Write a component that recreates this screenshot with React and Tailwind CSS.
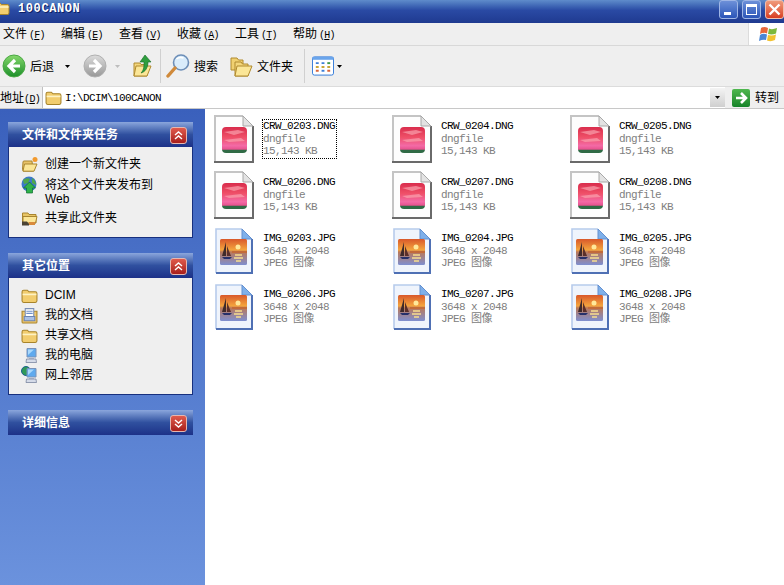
import React from "react";

const cjk = { fontFamily: '"Liberation Sans","Noto Sans CJK SC",sans-serif' };

function Folder({ size = 17 }) {
  return (
    <svg width={size} height={size} viewBox="0 0 16 16">
      <path d="M1 4.5 Q1 3 2.5 3 H6 L7.5 4.5 H13.5 Q15 4.5 15 6 V13 Q15 14.5 13.5 14.5 H2.5 Q1 14.5 1 13 Z" fill="#f2cd6e" stroke="#a8842a" />
      <path d="M1.5 7 H14.5" stroke="#fdf2c4" strokeWidth="1.5" />
    </svg>
  );
}

function DocsIcon() {
  return (
    <svg width="17" height="17" viewBox="0 0 16 16">
      <path d="M1 4 H15 V14 Q15 15 14 15 H2 Q1 15 1 14 Z" fill="#eec66a" stroke="#a9852f" />
      <path d="M4 1.5 H12 V9 H4 Z" fill="#fff" stroke="#7a8fb5" />
      <path d="M5 4 H11 M5 6 H11" stroke="#6f8fc9" />
      <path d="M3 9 H13 V13 H3 Z" fill="#a9c0e6" stroke="#6b84b4" />
    </svg>
  );
}

function ComputerIcon({ globe }) {
  return (
    <svg width="18" height="18" viewBox="0 0 18 18">
      {globe && <circle cx="5" cy="5" r="4.5" fill="#2f9a58" stroke="#1d5f8f" />}
      <path d="M6 2.5 H15 V11 H6 Z" fill="#5ea9ee" stroke="#7a92b8" />
      <path d="M7 3.5 L13 3.5 L7 9 Z" fill="#a9d8fb" />
      <path d="M8 11 H13 V13 H8 Z" fill="#b9c3d6" />
      <path d="M5.5 13 H15 L15.5 16.5 H5 Z" fill="#d5dbe8" stroke="#6d7a96" strokeWidth="0.7" />
    </svg>
  );
}

function NewFolderIcon() {
  return (
    <svg width="18" height="17" viewBox="0 0 18 17">
      <path d="M2 6 Q2 5 3 5 H11 L12 15 H3 Q1.5 15 1.5 13.5 Z" fill="#e9c46a" stroke="#a9852f" />
      <path d="M3.5 8 H16 L13 15.2 H2 Z" fill="#fbe697" stroke="#a9852f" />
      <circle cx="14" cy="3.5" r="2.5" fill="#f29a2e" />
    </svg>
  );
}

function PublishIcon() {
  return (
    <svg width="17" height="18" viewBox="0 0 17 18">
      <circle cx="8" cy="8" r="7.5" fill="#3b78c9" />
      <path d="M2 4 Q6 1 9 3 L7 7 L3 8 Z M11 2 Q15 5 15 9 L11 7 Z" fill="#4ea74a" />
      <path d="M8.5 6 L14.5 12 H11.5 V17 H5.5 V12 H2.5 Z" fill="#2fb24a" stroke="#0d6f2f" strokeWidth="0.7" />
    </svg>
  );
}

function ShareIcon() {
  return (
    <svg width="17" height="17" viewBox="0 0 17 17">
      <path d="M1.5 3 H7 L8 4.5 H15 V13 H1.5 Z" fill="#e8c566" stroke="#a9852f" />
      <path d="M2 6.5 H16 L14.5 13 H2 Z" fill="#fbe697" stroke="#a9852f" />
      <path d="M1 11.5 H6 L8 14 V15.5 H1 Z" fill="#4b4334" />
      <path d="M8 12 H14 V15 H8 Z" fill="#d98a3c" />
    </svg>
  );
}

function Chevron({ down }) {
  return (
    <span className="flex h-[17px] w-[17px] items-center justify-center rounded-[3px] border border-[#e5b7b0] bg-gradient-to-b from-[#e05a4c] to-[#a81d1b]">
      <svg width="9" height="9" viewBox="0 0 9 9" fill="none" stroke="#fff" strokeWidth="1.4" className={down ? "rotate-180" : ""}>
        <path d="M1 4 L4.5 1 L8 4 M1 8 L4.5 5 L8 8" />
      </svg>
    </span>
  );
}

function Panel({ title, down, children, h }) {
  return (
    <div className="w-[185px]">
      <div className="flex h-[25px] items-center justify-between bg-gradient-to-b from-[#8ba6dc] via-[#30509f] via-50% to-[#1d3188] pl-[14px] pr-[6px] pt-[1px]">
        <span className="text-[12px] font-bold text-white" style={cjk}>{title}</span>
        <Chevron down={down} />
      </div>
      {children && (
        <div className={`border border-t-0 border-[#17307e] bg-[#efefef] pl-[11px] pr-2 text-[12px] text-black ${h}`} style={cjk}>
          {children}
        </div>
      )}
    </div>
  );
}

function TaskRow({ icon, children, cls = "" }) {
  return (
    <div className={`flex items-start gap-[6px] ${cls}`}>
      <span className="flex h-[18px] w-[19px] shrink-0 items-center justify-center">{icon}</span>
      <span className="pt-[2px] leading-[14px]">{children}</span>
    </div>
  );
}

function CrwIcon() {
  return (
    <svg width="40" height="48" viewBox="0 0 40 48" className="shrink-0">
      <defs>
        <linearGradient id="crw" x1="0" y1="0" x2="0" y2="1">
          <stop offset="0" stopColor="#d92c4c" />
          <stop offset="0.4" stopColor="#ef5068" />
          <stop offset="0.72" stopColor="#f36aa6" />
          <stop offset="0.86" stopColor="#e6528e" />
          <stop offset="0.88" stopColor="#2f6a45" />
          <stop offset="1" stopColor="#2f6a45" />
        </linearGradient>
      </defs>
      <path d="M1 1 H29 L39 11 V47 H1 Z" fill="#fdfdfd" />
      <path d="M1 47 V1 H29" fill="none" stroke="#c4c4c4" strokeWidth="2" />
      <path d="M0 47 H39 V11" fill="none" stroke="#6a6a6a" strokeWidth="2" />
      <path d="M29 1 V11 H39 Z" fill="#e3e3e3" stroke="#a8a8a8" />
      <rect x="8" y="12" width="25" height="26" rx="4" fill="url(#crw)" />
      <path d="M10 17 L24 15 L31 17 L20 20 Z M10 25 L27 23 L31 26 L15 27 Z" fill="#f9a3ae" opacity="0.7" />
    </svg>
  );
}

function JpgIcon() {
  return (
    <svg width="38" height="46" viewBox="0 0 38 46" className="shrink-0">
      <defs>
        <linearGradient id="jpg" x1="0" y1="0" x2="0" y2="1">
          <stop offset="0" stopColor="#d9582a" />
          <stop offset="0.42" stopColor="#f4a53e" />
          <stop offset="0.5" stopColor="#b9785a" />
          <stop offset="1" stopColor="#7e8fd0" />
        </linearGradient>
      </defs>
      <path d="M1 1 H27 L37 11 V45 H1 Z" fill="#eff4fc" />
      <path d="M1 45 V1 H27" fill="none" stroke="#b7cbec" strokeWidth="1.6" />
      <path d="M1 45 H37 V11" fill="none" stroke="#4f70b4" strokeWidth="2" />
      <path d="M27 1 V11 H37 Z" fill="#7fb0ea" stroke="#6490d0" />
      <rect x="5" y="11" width="27" height="26" rx="1.5" fill="url(#jpg)" />
      <path d="M11 14 L11 28 L7 28 Z" fill="#3f2a2a" />
      <path d="M12 18 L16 28 L12 28 Z" fill="#5a2f2a" />
      <path d="M7 29 H17 L15 31 H9 Z" fill="#26306a" />
      <path d="M17 23 H32 V25 H17 Z" fill="#c26a3a" />
      <circle cx="23" cy="19" r="2.5" fill="#ffe89a" />
      <path d="M20 27 H27 M19 30 H28 M21 33 H26" stroke="#f8de8e" strokeWidth="1.4" />
    </svg>
  );
}

function FileItem({ kind, name, l2, l3, focus }) {
  const mono = { fontFamily: '"Liberation Mono","Noto Sans CJK SC",monospace', letterSpacing: "-0.6px" };
  return (
    <div className="flex h-[56px] items-start">
      <span className={`flex w-[50px] ${kind === "crw" ? "pl-[1px]" : "pl-[2px] pt-[1px]"}`}>{kind === "crw" ? <CrwIcon /> : <JpgIcon />}</span>
      <div
        className={`mt-[5px] w-[73px] whitespace-nowrap pb-[1px] text-[11px] leading-[12px] ${focus ? "outline-dotted outline-1 outline-black" : ""}`}
        style={mono}
      >
        <div className="text-black">{name}</div>
        <div className="mt-[1px] text-[#808080]">{l2}</div>
        <div className="text-[#808080]">{l3}</div>
      </div>
    </div>
  );
}

const files = [
  ["crw", "CRW_0203.DNG", "dngfile", "15,143 KB", true],
  ["crw", "CRW_0204.DNG", "dngfile", "15,143 KB"],
  ["crw", "CRW_0205.DNG", "dngfile", "15,143 KB"],
  ["crw", "CRW_0206.DNG", "dngfile", "15,143 KB"],
  ["crw", "CRW_0207.DNG", "dngfile", "15,143 KB"],
  ["crw", "CRW_0208.DNG", "dngfile", "15,143 KB"],
  ["jpg", "IMG_0203.JPG", "3648 x 2048", "JPEG 图像"],
  ["jpg", "IMG_0204.JPG", "3648 x 2048", "JPEG 图像"],
  ["jpg", "IMG_0205.JPG", "3648 x 2048", "JPEG 图像"],
  ["jpg", "IMG_0206.JPG", "3648 x 2048", "JPEG 图像"],
  ["jpg", "IMG_0207.JPG", "3648 x 2048", "JPEG 图像"],
  ["jpg", "IMG_0208.JPG", "3648 x 2048", "JPEG 图像"],
];

function RoundArrow({ disabled, right }) {
  const id = disabled ? "gr" : "gn";
  return (
    <svg width="24" height="24" viewBox="0 0 24 24">
      <defs>
        <linearGradient id={id} x1="0" y1="0" x2="0" y2="1">
          <stop offset="0" stopColor={disabled ? "#dcdcdc" : "#86d86c"} />
          <stop offset="1" stopColor={disabled ? "#989898" : "#1c8f2a"} />
        </linearGradient>
      </defs>
      <circle cx="12" cy="12" r="11" fill={`url(#${id})`} stroke={disabled ? "#b0b0b0" : "#4aa844"} />
      <path d="M13 6 L7 12 L13 18 M7 12 H18" fill="none" stroke="#fff" strokeWidth="3.2" transform={right ? "rotate(180 12 12)" : ""} />
    </svg>
  );
}

function Caret({ color = "#000" }) {
  return (
    <svg width="5" height="3" viewBox="0 0 5 3"><path d="M0 0 H5 L2.5 3 Z" fill={color} /></svg>
  );
}

function Menu({ label, k }) {
  return (
    <span className="w-[58px] whitespace-nowrap text-[12px] text-black" style={cjk}>
      {label}
      <span className="ml-[2px] text-[10px]" style={{ fontFamily: '"Liberation Mono",monospace', letterSpacing: "-0.8px" }}>
        (<span className="underline">{k}</span>)
      </span>
    </span>
  );
}

export default function App() {
  return (
    <div className="flex h-[585px] w-[784px] flex-col overflow-hidden bg-white">
      {/* Title bar */}
      <div className="relative flex h-[23px] shrink-0 items-start bg-gradient-to-b from-[#5f8ccb] via-[#2a4aa4] via-45% to-[#1f3a90]">
        <span className="-ml-[6px] flex"><Folder size={16} /></span>
        <span className="ml-[8px] text-[12px] font-bold leading-[18px] text-white" style={{ fontFamily: '"Liberation Mono",monospace', letterSpacing: "0.6px", textShadow: "1px 1px 0 #0b1f66" }}>100CANON</span>
        <div className="absolute right-0 top-0 flex gap-[4px]">
          <span className="flex h-[19px] w-[19px] items-end rounded-[3px] border border-[#9fb6e6] bg-gradient-to-b from-[#6d90d8] to-[#2c55b8] pb-[3px] pl-[4px]">
            <span className="h-[3px] w-[7px] bg-white" />
          </span>
          <span className="flex h-[19px] w-[19px] items-center justify-center rounded-[3px] border border-[#9fb6e6] bg-gradient-to-b from-[#6d90d8] to-[#2c55b8]">
            <span className="h-[11px] w-[11px] border border-t-[3px] border-white" />
          </span>
          <span className="flex h-[19px] w-[19px] items-center justify-center rounded-[3px] border border-[#f0c0b0] bg-gradient-to-b from-[#ef9a7a] to-[#d83c20]">
            <svg width="13" height="13" viewBox="0 0 13 13"><path d="M1.5 1.5 L11.5 11.5 M11.5 1.5 L1.5 11.5" stroke="#fff" strokeWidth="2.4" /></svg>
          </span>
        </div>
      </div>

      {/* Menu */}
      <div className="flex h-[23px] shrink-0 items-center justify-between border-b border-[#d8d8d8] bg-[#efefef]">
        <div className="flex pl-[3px]">
          <Menu label="文件" k="F" />
          <Menu label="编辑" k="E" />
          <Menu label="查看" k="V" />
          <Menu label="收藏" k="A" />
          <Menu label="工具" k="T" />
          <Menu label="帮助" k="H" />
        </div>
        <div className="flex h-[22px] w-[36px] items-center justify-center border-l border-[#dcdcdc] bg-white pl-[4px]">
          <svg width="20" height="18" viewBox="0 0 20 18">
            <path d="M2 3 Q5 1 9 3 L8 8.5 Q5 7 1 9 Z" fill="#e8673a" />
            <path d="M10 3.5 Q13 5 18 3 L17 8.5 Q13 10 9 9 Z" fill="#7cb83c" />
            <path d="M1 10 Q4 8 8 9.5 L7 15 Q4 14 0 16 Z" fill="#4a86d6" />
            <path d="M9 10 Q13 11 17 9.5 L16 15 Q12 17 8 15.5 Z" fill="#f2c230" />
          </svg>
        </div>
      </div>

      {/* Toolbar */}
      <div className="flex h-[41px] shrink-0 items-center border-b border-[#dcdcdc] bg-[#efefef] text-[12px] text-black" style={cjk}>
        <span className="ml-[2px] flex"><RoundArrow /></span>
        <span className="ml-[4px] w-[35px] pt-[1px]">后退</span>
        <Caret />
        <span className="ml-[13px] flex"><RoundArrow disabled right /></span>
        <span className="ml-[8px] flex"><Caret color="#bdbdbd" /></span>
        <span className="ml-[13px] flex">
          <svg width="20" height="24" viewBox="0 0 20 24">
            <path d="M1 9 H7 L8 10.5 H14 V22 H1 Z" fill="#f3d67c" stroke="#b08a2e" />
            <path d="M3 12 H18 L14 22 H1 Z" fill="#fbe697" stroke="#b08a2e" />
            <path d="M12 1 L18 8 H15 C15 14 12 18 8 19 C11 16 11 12 11 8 H7 Z" fill="#2f9e3e" stroke="#166b25" strokeWidth="0.6" />
          </svg>
        </span>
        <span className="ml-[7px] h-[34px] w-px bg-[#d0d0d0]" />
        <span className="ml-[5px] flex">
          <svg width="24" height="26" viewBox="0 0 24 26">
            <circle cx="15" cy="9.5" r="7.5" fill="#d9ecfb" stroke="#6d8fb8" strokeWidth="1.6" />
            <path d="M10.5 6 Q13.5 3.5 17.5 5" stroke="#fff" strokeWidth="1.6" fill="none" />
            <path d="M9 15 L2 23" stroke="#d08a3a" strokeWidth="3.4" strokeLinecap="round" />
          </svg>
        </span>
        <span className="ml-[4px] w-[36px] pt-[1px]">搜索</span>
        <span className="flex">
          <svg width="23" height="21" viewBox="0 0 23 21">
            <path d="M1 2 H7 L8.5 4 H13 V14 H1 Z" fill="#f0d070" stroke="#b08a2e" />
            <path d="M5 6 H11 L12.5 8 H18 V20 H5 Z" fill="#f3d67c" stroke="#b08a2e" />
            <path d="M7 10 H22 L18 20 H5 Z" fill="#fbe697" stroke="#b08a2e" />
          </svg>
        </span>
        <span className="ml-[4px] w-[47px] pt-[1px]">文件夹</span>
        <span className="h-[34px] w-px bg-[#d0d0d0]" />
        <span className="ml-[7px] flex">
          <svg width="22" height="20" viewBox="0 0 23 20">
            <rect x="0.5" y="0.5" width="22" height="19" rx="2" fill="#fff" stroke="#2f78d8" />
            <rect x="0.5" y="0.5" width="22" height="3" fill="#6aa5ec" />
            <path d="M4 6 H7 V8 H4 Z M10 6 H13 V8 H10 Z" fill="#3d7fd8" />
            <path d="M16 6 H19 V8 H16 Z" fill="#3c9a4a" />
            <path d="M4 10 H7 V12 H4 Z M10 10 H13 V12 H10 Z M16 10 H19 V12 H16 Z" fill="#c9a63a" />
            <path d="M4 14 H7 V16 H4 Z M16 14 H19 V16 H16 Z" fill="#d8643a" />
            <path d="M10 14 H13 V16 H10 Z" fill="#3d7fd8" />
          </svg>
        </span>
        <span className="ml-[3px] flex"><Caret /></span>
      </div>

      {/* Address bar */}
      <div className="flex h-[22px] shrink-0 items-center border-b border-[#c8c8c8] bg-[#efefef] text-[12px] text-black" style={cjk}>
        <span className="w-[42px] whitespace-nowrap pt-[1px]">地址<span className="text-[10px]" style={{ fontFamily: '"Liberation Mono",monospace', letterSpacing: "-0.6px" }}>(<span className="underline">D</span>)</span></span>
        <div className="flex h-[21px] w-[683px] items-center border-l border-[#c0c0c0] bg-white pl-[2px]">
          <Folder />
          <span className="ml-[3px] flex-1 pt-[1px] text-[11px]" style={{ fontFamily: '"Liberation Mono",monospace', letterSpacing: "-0.6px" }}>I:\DCIM\100CANON</span>
          <span className="flex h-[19px] w-[15px] items-center justify-center bg-gradient-to-b from-[#f4f4f4] to-[#cfcfcf]"><Caret /></span>
        </div>
        <span className="ml-[7px] flex h-[18px] w-[18px] items-center justify-center rounded-[2px] bg-gradient-to-b from-[#4fb84f] to-[#14842a]">
          <svg width="14" height="14" viewBox="0 0 14 14"><path d="M7 2 L12 7 L7 12 M12 7 H2" fill="none" stroke="#fff" strokeWidth="2.6" /></svg>
        </span>
        <span className="ml-[5px]">转到</span>
      </div>

      {/* Body */}
      <div className="flex min-h-0 flex-1">
        <aside className="flex w-[205px] shrink-0 flex-col gap-[15px] bg-gradient-to-b from-[#3a60bc] to-[#6b92dd] pl-[8px] pt-[13px]">
          <Panel title="文件和文件夹任务" h="h-[91px] pt-[8px]">
            <TaskRow icon={<NewFolderIcon />} cls="mb-[3px]">创建一个新文件夹</TaskRow>
            <TaskRow icon={<PublishIcon />} cls="mb-[3px]">将这个文件夹发布到<br />Web</TaskRow>
            <TaskRow icon={<ShareIcon />}>共享此文件夹</TaskRow>
          </Panel>
          <Panel title="其它位置" h="h-[117px] pt-[8px]">
            <TaskRow icon={<Folder />} cls="h-[20px]">DCIM</TaskRow>
            <TaskRow icon={<DocsIcon />} cls="h-[20px]">我的文档</TaskRow>
            <TaskRow icon={<Folder />} cls="h-[20px]">共享文档</TaskRow>
            <TaskRow icon={<ComputerIcon />} cls="h-[20px]">我的电脑</TaskRow>
            <TaskRow icon={<ComputerIcon globe />} cls="h-[20px]">网上邻居</TaskRow>
          </Panel>
          <Panel title="详细信息" down />
        </aside>
        <main className="grid flex-1 grid-cols-[178px_178px_178px] content-start pl-[8px] pt-[6px]">
          {files.map(([k, n, a, b, f]) => (
            <FileItem key={n} kind={k} name={n} l2={a} l3={b} focus={f} />
          ))}
        </main>
      </div>
    </div>
  );
}
